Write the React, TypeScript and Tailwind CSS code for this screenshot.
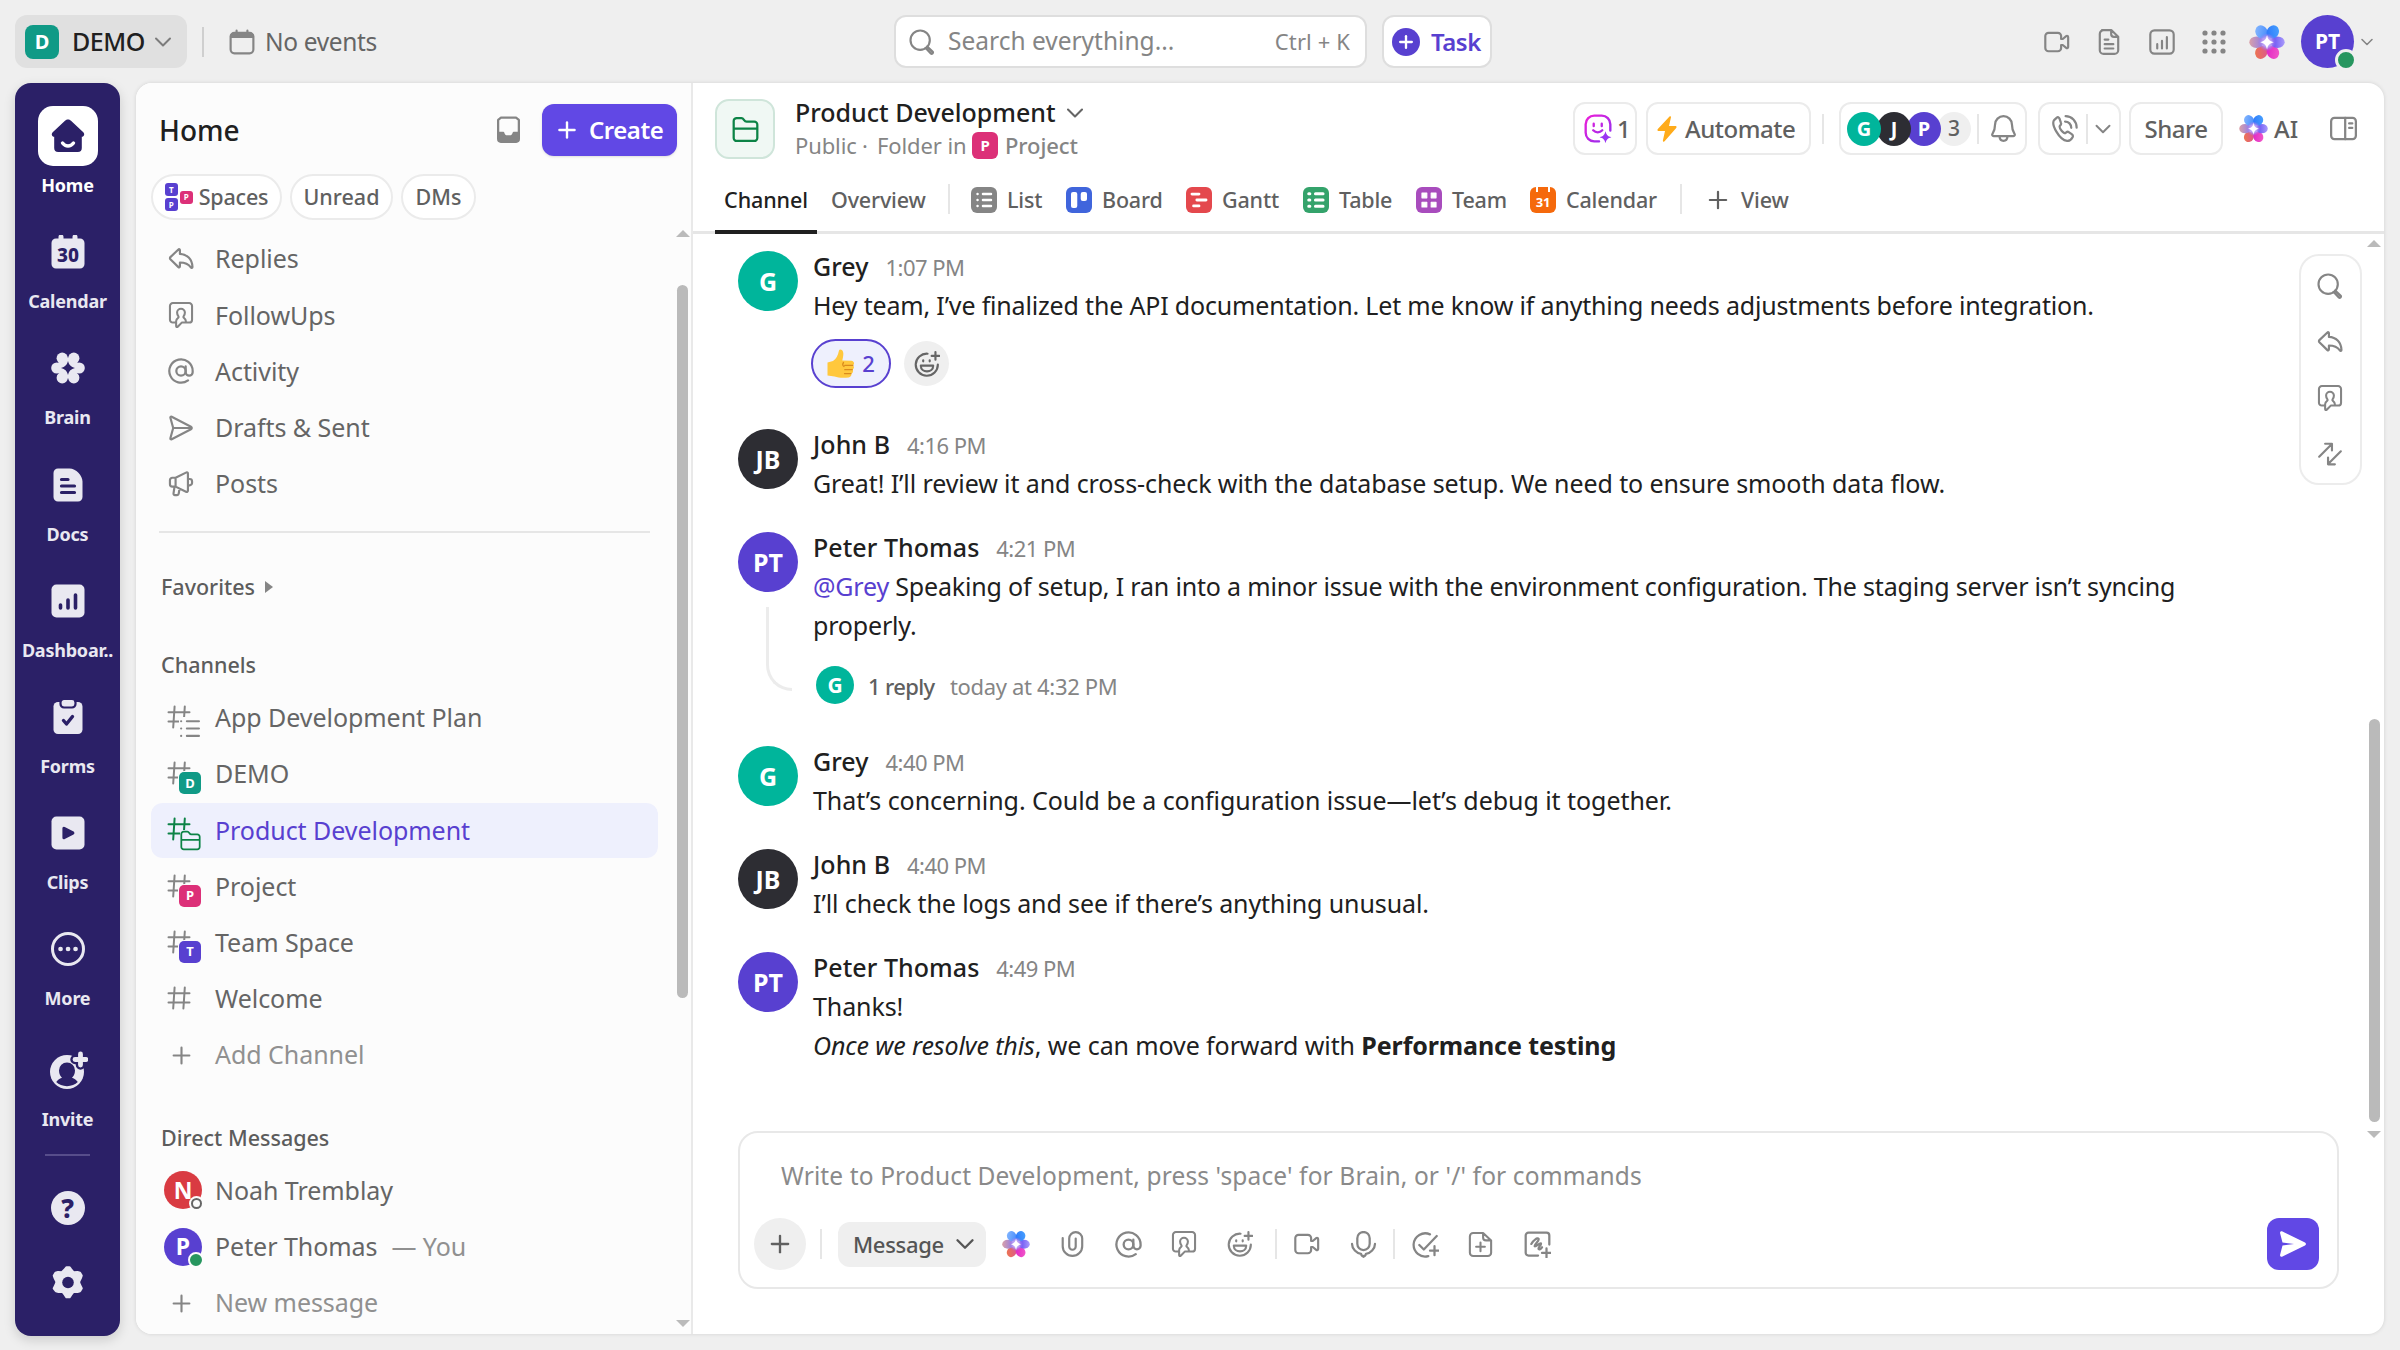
import type { ReactNode } from "react";
import clsx from "clsx";
import { AtSign, ChevronDown, Plus } from "lucide-react";

type IconProps = { size?: number; className?: string };

function Svg({
  size = 26,
  className,
  children,
  box = "0 0 24 24",
  sw = 2,
}: IconProps & { children: ReactNode; box?: string; sw?: number }) {
  return (
    <svg
      width={size}
      height={size}
      viewBox={box}
      fill="none"
      stroke="currentColor"
      strokeWidth={sw}
      strokeLinecap="round"
      strokeLinejoin="round"
      className={clsx("shrink-0", className)}
    >
      {children}
    </svg>
  );
}

/* ---------- outline icons ---------- */

const ReplyIcon = (p: IconProps) => (
  <Svg {...p}>
    <path d="M9.6 3.2c.6-.5 1.4-.1 1.4.7v3.4C17.5 7.6 22.3 12 22.6 19.4c0 .9-1 1.1-1.5.4-2.2-3.2-5.6-4.6-10.1-4.6v3.6c0 .8-.8 1.2-1.4.7l-7.400-7.300a1.300 1.300 0 0 1 0-1.900z" />
  </Svg>
);

const FollowUpIcon = (p: IconProps) => (
  <Svg {...p} sw={1.900}>
    <path d="M7.500 19H4.500a2.700 2.700 0 0 1-2.700-2.700V3.700A2.700 2.700 0 0 1 4.500 1h15a2.700 2.700 0 0 1 2.700 2.700v12.600a2.700 2.700 0 0 1-2.700 2.700h-6.800l-3.700 3.900c-.7.6-1.500.2-1.500-.7V17.800c0-1.500.6-2.400 1.800-3.200.6-.4.6-1 .2-1.500-.8-1-1.100-2.100-1.100-3.300a3.600 3.600 0 0 1 7.200 0c0 1.200-.3 2.300-1.100 3.300-.4.5-.4 1.100.2 1.500 1.200.8 1.800 1.700 1.800 3.200" />
  </Svg>
);

const PlaneIcon = (p: IconProps) => (
  <Svg {...p}>
    <path d="M2.200 2.600c-.2-.8.4-1.300 1.200-1l17.800 9.300c1 .5 1 1.700 0 2.200L3.400 22.400c-.8.3-1.400-.2-1.200-1L4.800 12zM4.800 12h16.400" />
  </Svg>
);

const MegaphoneIcon = (p: IconProps) => (
  <Svg {...p}>
    <path d="M7 6.200h-3A2.200 2.200 0 0 0 1.800 8.400v3.800A2.200 2.200 0 0 0 4 14.400h3zM7 6.200l9.600-4.700c1-.5 1.800 0 1.800 1v15.600c0 1-.8 1.500-1.800 1L7 14.400M18.400 7.400h1.600a2.200 2.200 0 0 1 2.200 2.200v1.400a2.200 2.200 0 0 1-2.200 2.200h-1.600M6 14.600l-.9 6c-.1.9.4 1.600 1.300 1.600h2c.8 0 1.400-.5 1.500-1.300l.7-4.700" />
  </Svg>
);

const SearchIcon = (p: IconProps) => (
  <Svg {...p}>
    <circle cx="10.300" cy="10.300" r="8.900" />
    <path d="m16.800 16.200 4.900 4.700a1.100 1.100 0 0 1-1.600 1.600l-4.700-4.900" />
  </Svg>
);

const SwapIcon = (p: IconProps) => (
  <Svg {...p}>
    <path d="M2 14.500 13.500 3M7.500 2.500h6.300v6.200M22 9.500 10.500 21M16.500 21.500h-6.300v-6.200" />
  </Svg>
);

const VideoIcon = (p: IconProps) => (
  <Svg {...p}>
    <path d="M4.200 3.500h8.600a3 3 0 0 1 3 3v2.700h1.500l3.200-2.600c.8-.6 1.800-.1 1.800.9v9c0 1-1 1.500-1.800.9l-3.200-2.600h-1.500v2.700a3 3 0 0 1-3 3H4.200a3 3 0 0 1-3-3v-11a3 3 0 0 1 3-3z" />
  </Svg>
);

const MicIcon = (p: IconProps) => (
  <Svg {...p}>
    <rect x="6.500" y="0.900" width="11" height="16" rx="5.500" />
    <path d="M1.800 11.500c0 4.300 4 8.300 8 8.800.6 2.900 3.800 2.900 4.400 0 4-.5 8-4.500 8-8.800M12 22.200v.8" />
  </Svg>
);

const ClipIcon = (p: IconProps) => (
  <Svg {...p}>
    <path d="M2.500 6.500v7.500a9 9 0 0 0 18 0V7a6 6 0 0 0-12 0v7.300a3 3 0 0 0 6 0V7" />
  </Svg>
);

const BellIcon = (p: IconProps) => (
  <Svg {...p}>
    <path d="M12 1a7.500 7.500 0 0 0-7.500 7.500c0 4-1 6.300-2.300 8.200-.6 1-.1 2.100 1 2.100h17.600c1.100 0 1.600-1.100 1-2.100-1.300-1.900-2.300-4.200-2.300-8.200A7.500 7.500 0 0 0 12 1zM8.500 19.500c.5 4.600 6.500 4.600 7 0" />
  </Svg>
);

const HashIcon = (p: IconProps) => (
  <Svg {...p} size={24}>
    <path d="M7.600 1.500 6.200 22.500M17.800 1.500 16.400 22.500M1.500 7.300h21M1.500 16.500h21" />
  </Svg>
);

const DocIcon = (p: IconProps) => (
  <Svg {...p}>
    <path d="M5.500 1h8.600l6.400 6.200v12.300A3.500 3.500 0 0 1 17 23H7a3.500 3.500 0 0 1-3.500-3.500v-15A3.500 3.500 0 0 1 7 1M14 1.200v3.400a2.600 2.600 0 0 0 2.600 2.600h3.600M8 9.800h3.400M8 14h8M8 18h8" />
  </Svg>
);

const DocPlusIcon = (p: IconProps) => (
  <Svg {...p}>
    <path d="M14.500 1H5A3.200 3.200 0 0 0 1.800 4.200v15.600A3.200 3.200 0 0 0 5 23h14a3.200 3.200 0 0 0 3.200-3.200V8.200zM14.500 1.200v4a2.800 2.800 0 0 0 2.800 2.800h4.700M12 10v8.400M7.800 14.200h8.400" />
  </Svg>
);

const ChartIcon = (p: IconProps) => (
  <Svg {...p}>
    <rect x="1.200" y="1.200" width="21.600" height="21.600" rx="3.800" />
    <path d="M7.600 14v4M12 11v7M16.500 7.500V18" />
  </Svg>
);

const SmilePlusIcon = (p: IconProps) => (
  <Svg {...p}>
    <path d="M12.500 2.500A10.200 10.200 0 1 0 22 12.500M19.800 1v7M16.300 4.500h7M8.500 8.500v1M14.500 8.500v1M6.300 13.500h11.400c0 7-11.400 7-11.400 0z" />
  </Svg>
);

const CheckPlusIcon = (p: IconProps) => (
  <Svg {...p}>
    <path d="M16 3a10.300 10.300 0 1 0-1.500 19.300M6.500 12.500l4 4L22 4.500M20 13.500v8M16 17.500h8" />
  </Svg>
);

const ScribblePlusIcon = (p: IconProps) => (
  <Svg {...p}>
    <path d="M12.500 21.800H4a2.500 2.500 0 0 1-2.500-2.500V4A2.500 2.500 0 0 1 4 1.500h16A2.500 2.500 0 0 1 22.500 4v8M6.500 11.500c2-3.500 5.500-6 6.500-4.500s-4.500 5.500-3.500 6.500 4.500-3.500 5.500-2.500-3 4-2 5 2.500-1 3-1.500M20 15.500v8M16 19.500h8" />
  </Svg>
);

const CalendarIcon = (p: IconProps) => (
  <Svg {...p}>
    <rect x="1.500" y="3.500" width="21" height="19" rx="3.500" />
    <path d="M1.800 7.200h20.400M2.200 5.600h19.600M7 1.500v3.500M17 1.500v3.500" />
  </Svg>
);

const FolderIcon = (p: IconProps) => (
  <Svg {...p}>
    <path d="M1.500 19.500v-15A2.700 2.700 0 0 1 4.200 1.800h4.200c2.400 0 2 3.200 4.600 3.200h6.800a2.700 2.700 0 0 1 2.700 2.700v11.800a2.700 2.700 0 0 1-2.700 2.700H4.200a2.700 2.700 0 0 1-2.700-2.700zM1.500 11.200h21" />
  </Svg>
);

const PhoneIcon = (p: IconProps) => (
  <Svg {...p}>
    <path d="M5.200 2.300 3 4.300C-.5 8 7.500 22.300 14.300 23c2 .2 4-1.600 4.900-3.300.6-1.200.2-2-.8-2.700l-2.300-1.600c-1.200-.8-2.200-.6-3.100.5-1.500 1.500-6.300-4.500-5.100-6.200 1-.9 1.500-1.800.8-3.100L7.500 3.100c-.5-1-1.400-1.500-2.300-.8zM13 1c5.500 0 9.800 4.600 9.800 10.300M12.500 5.800c3.200 0 5.500 2.500 5.500 5.600" />
  </Svg>
);

const PanelIcon = (p: IconProps) => (
  <Svg {...p}>
    <rect x="1" y="2.500" width="22" height="19" rx="3" />
    <path d="M13.500 2.500v19M17 7.500h2.800M17 11.500h2.800" />
  </Svg>
);

const InboxIcon = (p: IconProps) => (
  <Svg {...p} sw={2}>
    <path d="M5.300 1.500h13.400l2.500 2v17a2.400 2.400 0 0 1-2.400 2.400H5.200a2.400 2.400 0 0 1-2.400-2.400v-17z" />
    <path
      d="M2.300 14h5.200c1 0 1 3 2.500 3h4c1.500 0 1.500-3 2.500-3h5.200v6.500a2.400 2.400 0 0 1-2.400 2.400H5a2.400 2.400 0 0 1-2.400-2.400z"
      fill="currentColor"
      stroke="none"
    />
  </Svg>
);

const ListHashIcon = () => (
  <Svg size={21} box="0 0 20 20" sw={2} className="absolute left-[11px] top-[10px] bg-[#fcfcfc]">
    <path d="M2 4h.1M2 11h.1M2 18h.1M7.500 4H19M7.500 11H19M7.500 18H19" />
  </Svg>
);

/* ---------- filled rail icons ---------- */

const HomeSolid = () => (
  <Svg size={34} box="0 0 34 34">
    <path
      d="M17 0.500c1.200 0 2 .5 3 1.300l12.300 11.400c1.700 1.800.9 4.300-1.500 4.600V29a4 4 0 0 1-4 4H7.200a4 4 0 0 1-4-4V17.800c-2.400-.3-3.200-2.800-1.500-4.600L14 1.800c1-.8 1.800-1.300 3-1.300z"
      fill="#2b2067"
      stroke="none"
    />
    <path d="M11.500 24c3 4 8 4 11 0" stroke="#fff" strokeWidth="3.400" />
  </Svg>
);

const Calendar30 = () => (
  <Svg size={34} box="0 0 34 34">
    <path
      d="M5 3.500h2.500V2a2.500 2.500 0 0 1 5 0v1.500h9V2a2.500 2.500 0 0 1 5 0v1.500H29a4.500 4.500 0 0 1 4.500 4.500v21a4.500 4.500 0 0 1-4.500 4.500H5A4.500 4.500 0 0 1 .5 29V8A4.500 4.500 0 0 1 5 3.500z"
      fill="currentColor"
      stroke="none"
    />
    <text x="17" y="26.500" textAnchor="middle" fontSize="19" fontWeight="800" fill="#2b2067" stroke="none">
      30
    </text>
  </Svg>
);

const BrainSolid = () => (
  <Svg size={34} box="0 0 34 34">
    <g fill="currentColor" stroke="none">
      <circle cx="5.800" cy="17" r="5.600" />
      <circle cx="28.200" cy="17" r="5.600" />
      <circle cx="11.200" cy="7.200" r="5.600" />
      <circle cx="22.800" cy="7.200" r="5.600" />
      <circle cx="11.200" cy="26.800" r="5.600" />
      <circle cx="22.800" cy="26.800" r="5.600" />
      <circle cx="17" cy="17" r="10.500" />
    </g>
    <path d="M17 10c1.200 4.200 2.800 5.800 7 7-4.200 1.200-5.800 2.800-7 7-1.200-4.200-2.800-5.800-7-7 4.200-1.200 5.800-2.800 7-7z" fill="#2b2067" stroke="none" />
  </Svg>
);

const DocSolid = () => (
  <Svg size={34} box="0 0 34 34">
    <path
      d="M7 .5h11.500c6.500 0 13 7 13 13V29a4.500 4.500 0 0 1-4.500 4.500H7A4.500 4.500 0 0 1 2.500 29V5A4.500 4.500 0 0 1 7 .5z"
      fill="currentColor"
      stroke="none"
    />
    <path d="M10.500 11.500h6.500M10.500 18h13M10.500 24.500h13" stroke="#2b2067" strokeWidth="3.200" />
  </Svg>
);

const DashSolid = () => (
  <Svg size={34} box="0 0 34 34">
    <rect x=".5" y=".5" width="33" height="33" rx="5" fill="currentColor" stroke="none" />
    <path d="M9.500 21v3M17 16v8M24.500 11v13" stroke="#2b2067" strokeWidth="3.600" />
  </Svg>
);

const FormSolid = () => (
  <Svg size={34} box="0 0 34 34" className="overflow-visible">
    <rect x="2.500" y="2" width="29" height="32" rx="4.500" fill="currentColor" stroke="none" />
    <rect x="9.500" y="-1" width="15" height="8.500" rx="3.500" fill="currentColor" stroke="#2b2067" strokeWidth="2.200" />
    <path d="m12.500 20.500 3 3.500 6-7.500" stroke="#2b2067" strokeWidth="3.400" />
  </Svg>
);

const ClipSolid = () => (
  <Svg size={34} box="0 0 34 34">
    <rect x=".5" y=".5" width="33" height="33" rx="5" fill="currentColor" stroke="none" />
    <path d="M13 12.300v9.400l8.800-4.700z" fill="#2b2067" stroke="#2b2067" strokeWidth="3.200" />
  </Svg>
);

const MoreRound = () => (
  <Svg size={36} box="0 0 36 36" sw={3}>
    <circle cx="18" cy="18" r="15.500" />
    <path d="M10.500 18h.1M18 18h.1M25.500 18h.1" strokeWidth="4.600" />
  </Svg>
);

const InviteSolid = () => (
  <Svg size={40} box="0 0 40 40">
    <circle cx="19" cy="22" r="17" fill="currentColor" stroke="none" />
    <path d="M19 12.500a8 8 0 0 1 8 8c0 3.500-1.600 5.800-3 7.200 2.600 1 4.500 2.300 5.800 4.300-5 5.500-16.600 5.500-21.600 0 1.300-2 3.200-3.300 5.800-4.300-1.400-1.400-3-3.700-3-7.200a8 8 0 0 1 8-8z" fill="#2b2067" stroke="none" />
    <path d="M32.500 4v11M27 9.500h11" stroke="#2b2067" strokeWidth="9.500" />
    <path d="M32.500 4v11M27 9.500h11" strokeWidth="4.800" />
  </Svg>
);

const HelpSolid = () => (
  <span className="flex h-[34px] w-[34px] items-center justify-center rounded-full bg-[#e9e8f1] text-[26px] font-extrabold leading-none text-[#2b2067]">
    ?
  </span>
);

const GearSolid = () => (
  <Svg size={34} box="0 0 34 34">
    <g fill="currentColor" stroke="currentColor" strokeWidth="2.500">
      <path d="m14 3.500 1.500-2h3l1.500 2 2.500 3 4-.2 2.500.7 1.500 2.600-.8 2.400-1.700 3.400V17l1.500 3.300 1 2.100-1.500 2.600-2.500.7-4-.2-2.500 3.200-1.500 2.300h-3l-1.500-2.300-2.500-3.200-4 .2-2.500-.7L3 22.400l1-2.100L5.500 17v-1.600L3.800 12 3 9.600 4.500 7 7 6.300l4 .2z" />
    </g>
    <circle cx="17" cy="16.500" r="5.800" fill="#2b2067" stroke="none" />
  </Svg>
);

/* ---------- colour marks ---------- */

function BrainMark({ size = 36 }: { size?: number }) {
  return (
    <svg width={size} height={size} viewBox="0 0 36 36" className="shrink-0">
      <defs>
        <linearGradient id="petal-l" x1="0" x2="1">
          <stop offset="0" stopColor="#d9a0a8" />
          <stop offset="1" stopColor="#8f7be8" />
        </linearGradient>
        <linearGradient id="petal-r" x1="1" x2="0">
          <stop offset="0" stopColor="#a99bfb" />
          <stop offset="1" stopColor="#5f45f2" />
        </linearGradient>
        <linearGradient id="petal-tl" x1="0" y1="0" x2="1" y2="1">
          <stop offset="0" stopColor="#8cbcff" />
          <stop offset="1" stopColor="#3f86fb" />
        </linearGradient>
        <linearGradient id="petal-tr" x1="1" y1="0" x2="0" y2="1">
          <stop offset="0" stopColor="#49a5ff" />
          <stop offset="1" stopColor="#2a72fa" />
        </linearGradient>
        <linearGradient id="petal-bl" x1="0" y1="1" x2="1" y2="0">
          <stop offset="0" stopColor="#f07a45" />
          <stop offset="1" stopColor="#d8539a" />
        </linearGradient>
        <linearGradient id="petal-br" x1="1" y1="1" x2="0" y2="0">
          <stop offset="0" stopColor="#f35fc9" />
          <stop offset="1" stopColor="#df1fc4" />
        </linearGradient>
        <radialGradient id="petal-core">
          <stop offset="0" stopColor="#efe6ff" />
          <stop offset="0.500" stopColor="#b79bf3" />
          <stop offset="1" stopColor="#9c6ff0" stopOpacity="0" />
        </radialGradient>
      </defs>
      <ellipse cx="12.500" cy="28.300" rx="6" ry="6.800" fill="url(#petal-bl)" transform="rotate(30 12.500 28)" />
      <ellipse cx="23.800" cy="28.300" rx="6" ry="6.800" fill="url(#petal-br)" transform="rotate(-30 23.800 28)" />
      <ellipse cx="7.500" cy="18.200" rx="7.200" ry="5.800" fill="url(#petal-l)" />
      <ellipse cx="28.500" cy="18.200" rx="7.200" ry="5.800" fill="url(#petal-r)" />
      <ellipse cx="12.500" cy="8" rx="6" ry="6.800" fill="url(#petal-tl)" transform="rotate(-30 12.500 8)" />
      <ellipse cx="23.800" cy="8" rx="6" ry="6.800" fill="url(#petal-tr)" transform="rotate(30 23.800 8)" />
      <circle cx="18" cy="18.200" r="9" fill="url(#petal-core)" />
      <path d="M18 11.500c1.200 4.300 2.500 5.600 6.800 6.700-4.300 1.200-5.600 2.400-6.800 6.800-1.200-4.400-2.500-5.600-6.800-6.800 4.300-1.100 5.600-2.400 6.800-6.700z" fill="#fff" />
    </svg>
  );
}

const ThumbIcon = () => (
  <svg width="29" height="30" viewBox="0 0 29 30" className="shrink-0">
    <path
      d="M1.500 13.500 7 12c3-2 5-5.500 6-10.500C13.500-.3 17 .3 17.300 4c.2 3-.6 5.500-1 7.500l9 .3c3 .2 3.600 3.500 1.600 4.500 1.600 1.200 1.300 3.700-.5 4.300 1.200 1.400.5 3.400-1.200 3.900.7 1.500-.3 3.600-2.500 3.900-4 .6-9.700.8-14.200-.9L1.500 26.500z"
      fill="#ffc83d"
    />
    <path d="M26.800 16.400h-8M26.300 20.700h-7.500M25 24.600h-6.500M17.500 13.500c-1.200 1.600-1 3 .5 4" fill="none" stroke="#d98a1c" strokeWidth="1.300" strokeLinecap="round" />
  </svg>
);

const AgentIcon = () => (
  <svg width="28" height="30" viewBox="0 0 26 28" fill="none" strokeLinecap="round" className="shrink-0">
    <defs>
      <linearGradient id="agent" x1="0" y1="0" x2="1" y2="1">
        <stop offset="0" stopColor="#ee1fd8" />
        <stop offset="1" stopColor="#8b2ff0" />
      </linearGradient>
    </defs>
    <path
      d="M14 25.500H9.500A8 8 0 0 1 1.500 17.500v-8a8 8 0 0 1 8-8h7a8 8 0 0 1 8 8v6M9 9v2.200M16.500 9v2.200M8.500 15.200c2.500 2.600 6 2.600 8.500 0"
      stroke="url(#agent)"
      strokeWidth="2.200"
    />
    <path d="M20 16c1 3.600 2 4.600 5.500 5.600-3.500 1-4.500 2-5.500 5.600-1-3.600-2-4.600-5.500-5.600 3.500-1 4.500-2 5.500-5.600z" fill="#9a35f3" />
  </svg>
);

const BoltIcon = () => (
  <svg width="20" height="26" viewBox="0 0 20 26" className="shrink-0">
    <path d="M12.500.5c.8-.8 1.800-.2 1.500.8L12 10h6.300c1.200 0 1.600 1 .9 1.900L7.600 25.300c-.8.9-2 .2-1.700-.9L8 15H1.700C.5 15 .1 14 .8 13.100z" fill="#ffab1a" />
  </svg>
);

/* ---------- small pieces ---------- */

function Square({ letter, className }: { letter: string; className: string }) {
  return (
    <span className={clsx("flex shrink-0 items-center justify-center font-bold leading-none text-white", className)}>
      {letter}
    </span>
  );
}

function Avatar({ text, className }: { text: string; className: string }) {
  return (
    <span
      className={clsx(
        "flex shrink-0 items-center justify-center rounded-full font-bold leading-none text-white",
        className
      )}
    >
      {text}
    </span>
  );
}

/* ---------- top bar ---------- */

function TopBar() {
  return (
    <header className="flex h-[83px] shrink-0 items-center pl-[15px] pr-[23px]">
      <div className="flex h-[53px] w-[172px] items-center rounded-xl bg-[#e0e0e0] pl-[10px]">
        <Square letter="D" className="h-[34px] w-[34px] rounded-lg bg-[#109a86] text-[20px]" />
        <span className="ml-[13px] w-[77px] text-[25px] font-medium tracking-[-0.02em] text-[#202020]">DEMO</span>
        <ChevronDown size={28} strokeWidth={1.700} className="text-[#7c7c7c]" />
      </div>
      <div className="ml-[15px] h-[30px] w-[2px] bg-[#cfcfcf]" />
      <CalendarIcon size={26} className="ml-[25px] text-[#858585]" />
      <span className="ml-[10px] w-[629px] pt-px text-[24.500px] tracking-[-0.015em] text-[#656565]">No events</span>

      <div className="flex h-[53px] w-[473px] items-center rounded-xl border-2 border-[#dedede] bg-white pl-[13px] pr-[15px] text-[#858585]">
        <SearchIcon size={26} />
        <span className="ml-[13px] text-[24.500px]">Search everything...</span>
        <span className="ml-auto text-[22px] tracking-[0.005em]">Ctrl + K</span>
      </div>
      <div className="ml-[15px] flex h-[53px] w-[110px] items-center rounded-xl border-2 border-[#dedede] bg-white pl-[8px] text-[#5840d0]">
        <span className="flex h-7 w-7 items-center justify-center rounded-full bg-[#5840d0] text-white">
          <Plus size={20} strokeWidth={2.800} />
        </span>
        <span className="ml-[11px] text-[24px] font-semibold tracking-[-0.02em]">Task</span>
      </div>

      <div className="ml-auto flex items-center text-[#858585]">
        <VideoIcon />
        <DocIcon className="ml-[26px]" />
        <ChartIcon className="ml-[27px]" />
        <svg width="24" height="24" viewBox="0 0 24 24" className="ml-[27px]" fill="currentColor">
          {[3, 12, 21].map((y) => [3, 12, 21].map((x) => <circle key={`${x}-${y}`} cx={x} cy={y} r="2.600" />))}
        </svg>
        <span className="ml-[23px] flex">
          <BrainMark size={36} />
        </span>
        <div className="relative ml-[16px]">
          <Avatar text="PT" className="h-[53px] w-[53px] bg-[#5840d0] text-[21px]" />
          <span className="absolute -bottom-[3px] -right-[3px] h-[22px] w-[22px] rounded-full border-[3px] border-[#efefef] bg-[#27965f]" />
        </div>
        <ChevronDown size={20} strokeWidth={1.900} className="ml-[3px]" />
      </div>
    </header>
  );
}

/* ---------- rail ---------- */

const RAIL: { label: string; icon: ReactNode; active?: boolean }[] = [
  { label: "Home", icon: <HomeSolid />, active: true },
  { label: "Calendar", icon: <Calendar30 /> },
  { label: "Brain", icon: <BrainSolid /> },
  { label: "Docs", icon: <DocSolid /> },
  { label: "Dashboar..", icon: <DashSolid /> },
  { label: "Forms", icon: <FormSolid /> },
  { label: "Clips", icon: <ClipSolid /> },
  { label: "More", icon: <MoreRound /> },
];

function Rail() {
  return (
    <nav className="flex h-[1253px] w-[105px] shrink-0 flex-col items-center rounded-[16px] bg-[#2b2067] pt-[23px] text-[#e9e8f1] shadow-[0_4px_12px_rgba(0,0,0,0.15)]">
      {RAIL.map((item) => (
        <div key={item.label} className="flex h-[116.200px] w-full shrink-0 flex-col items-center">
          <div
            className={clsx(
              "flex h-[60px] w-[60px] items-center justify-center",
              item.active && "rounded-[15px] bg-white"
            )}
          >
            {item.icon}
          </div>
          <span
            className={clsx(
              "mt-[6px] whitespace-nowrap text-[18px] font-bold leading-[26px] tracking-[-0.012em]",
              item.active && "text-white"
            )}
          >
            {item.label}
          </span>
        </div>
      ))}
      <div className="mt-[4px] flex h-[60px] items-center">
        <InviteSolid />
      </div>
      <span className="mt-[6px] text-[18px] font-bold leading-[26px] tracking-[-0.012em]">Invite</span>
      <div className="mt-[22px] h-[2px] w-[45px] shrink-0 bg-[#574d8b]" />
      <div className="mt-[35px]">
        <HelpSolid />
      </div>
      <div className="mt-[41px]">
        <GearSolid />
      </div>
    </nav>
  );
}

/* ---------- sidebar ---------- */

const NAV = [
  { label: "Replies", icon: <ReplyIcon /> },
  { label: "FollowUps", icon: <FollowUpIcon /> },
  { label: "Activity", icon: <AtSign size={28} strokeWidth={1.900} className="-ml-px" /> },
  { label: "Drafts & Sent", icon: <PlaneIcon /> },
  { label: "Posts", icon: <MegaphoneIcon /> },
];

const BADGE = "absolute left-[11px] top-[9px] h-[22px] w-[22px] rounded-[5px] text-[13px] ring-1 ring-[#fcfcfc]";

const CHANNELS: { label: string; badge?: ReactNode; active?: boolean }[] = [
  { label: "App Development Plan", badge: <ListHashIcon /> },
  { label: "DEMO", badge: <Square letter="D" className={clsx(BADGE, "bg-[#109a86]")} /> },
  {
    label: "Product Development",
    active: true,
    badge: <FolderIcon size={21} className="absolute left-[12px] top-[11px] bg-[#eef0fd]" />,
  },
  { label: "Project", badge: <Square letter="P" className={clsx(BADGE, "bg-[#dc3078]")} /> },
  { label: "Team Space", badge: <Square letter="T" className={clsx(BADGE, "bg-[#5840d0]")} /> },
  { label: "Welcome" },
];

const ROW = "flex h-[56.200px] shrink-0 items-center pl-[17px]";
const ROW_TEXT = "text-[25px] tracking-[-0.002em] whitespace-nowrap";
const PILL =
  "flex h-[46px] items-center justify-center rounded-full border-2 border-[#ebebeb] bg-white text-[21.500px] font-medium text-[#606060]";
const SECTION = "ml-[10px] flex h-[30px] shrink-0 items-center text-[21.500px] font-medium text-[#5c5c5c]";

function Sidebar() {
  return (
    <aside className="flex w-[557px] shrink-0 flex-col border-r-2 border-[#e9e9e9] bg-[#fcfcfc]">
      <div className="flex h-[91px] items-center pl-[23px] pr-[14px] pt-[2px]">
        <h1 className="text-[28px] font-medium text-[#202020]">Home</h1>
        <InboxIcon size={27} className="ml-auto text-[#858585]" />
        <button className="ml-[20px] flex h-[52px] w-[135px] items-center rounded-xl bg-[#6148e5] pl-[12px] text-white shadow-sm">
          <Plus size={26} strokeWidth={2.200} />
          <span className="ml-[9px] text-[24px] font-semibold tracking-[-0.02em]">Create</span>
        </button>
      </div>
      <div className="flex gap-[8px] pl-[15px]">
        <div className={clsx(PILL, "w-[131px]")}>
          <span className="mr-[6px] flex items-center gap-[2px]">
            <span className="flex flex-col gap-[2px]">
              <Square letter="T" className="h-[13px] w-[13px] rounded-[3px] bg-[#5840d0] text-[8px]" />
              <Square letter="P" className="h-[13px] w-[13px] rounded-[3px] bg-[#5840d0] text-[8px]" />
            </span>
            <Square letter="P" className="h-[13px] w-[13px] rounded-[3px] bg-[#dc3078] text-[8px]" />
          </span>
          <span className="pt-px tracking-[-0.01em]">Spaces</span>
        </div>
        <div className={clsx(PILL, "w-[103px] pt-px")}>Unread</div>
        <div className={clsx(PILL, "w-[75px] pt-px")}>DMs</div>
      </div>

      <div className="flex min-h-0 flex-1">
        <div className="mt-[11px] flex min-w-0 flex-1 flex-col pl-[15px] text-[#656565]">
          {NAV.map((item) => (
            <div key={item.label} className={ROW}>
              <span className="flex w-[47px] text-[#858585]">{item.icon}</span>
              <span className={ROW_TEXT}>{item.label}</span>
            </div>
          ))}
          <div className="ml-[8px] mt-[19px] h-[2px] w-[491px] shrink-0 bg-[#e6e6e6]" />
          <div className={clsx(SECTION, "mt-[39px]")}>
            Favorites
            <span className="ml-[10px] h-0 w-0 border-y-[6px] border-l-[8px] border-y-transparent border-l-[#858585]" />
          </div>
          <div className={clsx(SECTION, "mt-[48px]")}>Channels</div>
          <div className="mt-[10px] flex flex-col">
            {CHANNELS.map((c) => (
              <div
                key={c.label}
                className={clsx(
                  ROW,
                  "w-[507px] rounded-xl border-y-[1.500px] border-transparent bg-clip-padding",
                  c.active && "bg-[#eef0fd] text-[#5840d0]"
                )}
              >
                <span className={clsx("relative flex w-[47px]", c.active ? "text-[#0c8346]" : "text-[#858585]")}>
                  <HashIcon className="-ml-px -mt-[2px]" />
                  {c.badge}
                </span>
                <span className={ROW_TEXT}>{c.label}</span>
              </div>
            ))}
            <div className={clsx(ROW, "text-[#909090]")}>
              <span className="flex w-[47px]">
                <Plus size={27} strokeWidth={1.900} className="text-[#858585]" />
              </span>
              <span className={ROW_TEXT}>Add Channel</span>
            </div>
          </div>
          <div className={clsx(SECTION, "mt-[40px]")}>Direct Messages</div>
          <div className="mt-[9px] flex flex-col">
            <div className={ROW}>
              <span className="relative -ml-[4px] flex w-[51px]">
                <Avatar text="N" className="h-[38px] w-[38px] bg-[#d93b42] text-[23px]" />
                <span className="absolute left-[25px] top-[25px] h-[15px] w-[15px] rounded-full bg-[#fcfcfc] p-[2px]">
                  <span className="block h-[11px] w-[11px] rounded-full border-2 border-[#656565]" />
                </span>
              </span>
              <span className={ROW_TEXT}>Noah Tremblay</span>
            </div>
            <div className={ROW}>
              <span className="relative -ml-[4px] flex w-[51px]">
                <Avatar text="P" className="h-[38px] w-[38px] bg-[#5840d0] text-[23px]" />
                <span className="absolute left-[24px] top-[24px] h-[16px] w-[16px] rounded-full border-2 border-[#fcfcfc] bg-[#27965f]" />
              </span>
              <span className={ROW_TEXT}>Peter Thomas</span>
              <span className={clsx(ROW_TEXT, "ml-[14px] text-[#909090]")}>— You</span>
            </div>
            <div className={clsx(ROW, "pt-px text-[#909090]")}>
              <span className="flex w-[47px]">
                <Plus size={27} strokeWidth={1.900} className="text-[#858585]" />
              </span>
              <span className={ROW_TEXT}>New message</span>
            </div>
          </div>
        </div>
        <div className="mt-[10px] flex w-[17px] shrink-0 flex-col items-center pb-[7px]">
          <span className="h-0 w-0 border-x-[7px] border-b-[7px] border-x-transparent border-b-[#bababa]" />
          <span className="mt-[48px] h-[713px] w-[11px] rounded-full bg-[#bababa]" />
          <span className="mt-auto h-0 w-0 border-x-[7px] border-t-[7px] border-x-transparent border-t-[#bababa]" />
        </div>
      </div>
    </aside>
  );
}

/* ---------- channel header ---------- */

const BTN = "flex h-[53px] items-center rounded-xl border-2 border-[#ebebeb] bg-white";

function ChannelHeader() {
  return (
    <div className="flex h-[98px] shrink-0 items-start pl-[22px] pt-[15px]">
      <div className="mt-px flex h-[60px] w-[60px] items-center justify-center rounded-[14px] border-2 border-[#cfe5da] bg-[#f0f8f4] text-[#0c8346]">
        <FolderIcon size={27} />
      </div>
      <div className="-mt-px ml-[20px] w-[780px]">
        <div className="flex h-[32px] items-center">
          <span className="w-[266px] whitespace-nowrap text-[25px] font-medium text-[#202020]">
            Product Development
          </span>
          <ChevronDown size={28} strokeWidth={1.800} className="text-[#656565]" />
        </div>
        <div className="flex h-[32px] items-center text-[22px] tracking-[-0.005em] text-[#858585]">
          <span className="w-[67px]">Public</span>
          <span className="w-[15px]">·</span>
          <span className="w-[95px] whitespace-nowrap">Folder in</span>
          <Square letter="P" className="h-[27px] w-[26px] rounded-md bg-[#dc3078] text-[15px]" />
          <span className="ml-[7px] font-medium">Project</span>
        </div>
      </div>

      <div className="-ml-[2px] mt-[4px] flex items-center text-[24px] font-medium text-[#606060]">
        <div className={clsx(BTN, "w-[64px] gap-[5px] pl-[9px]")}>
          <AgentIcon />
          <span>1</span>
        </div>
        <div className={clsx(BTN, "ml-[9px] w-[165px] gap-[8px] pl-[9px] tracking-[-0.02em]")}>
          <BoltIcon />
          Automate
        </div>
        <div className="ml-[11px] h-[30px] w-[2px] bg-[#e6e6e6]" />
        <div className={clsx(BTN, "ml-[15px] w-[188px] pl-[6px]")}>
          <Avatar text="G" className="z-30 h-[34px] w-[34px] bg-[#00b59b] text-[20px]" />
          <Avatar text="J" className="z-20 -ml-[4px] h-[34px] w-[34px] bg-[#2d2d33] text-[20px]" />
          <Avatar text="P" className="z-10 -ml-[4px] h-[34px] w-[34px] bg-[#5840d0] text-[20px]" />
          <span className="-ml-[4px] flex h-[34px] w-[34px] items-center justify-center rounded-full bg-[#efefef] text-[21px]">
            3
          </span>
          <span className="ml-[6px] h-[30px] w-[2px] bg-[#e6e6e6]" />
          <BellIcon size={27} className="ml-[11px] text-[#858585]" />
        </div>
        <div className={clsx(BTN, "ml-[11px] w-[83px] pl-[11px] text-[#858585]")}>
          <PhoneIcon size={27} />
          <span className="ml-[8px] h-[30px] w-[2px] bg-[#e6e6e6]" />
          <ChevronDown size={26} strokeWidth={1.800} className="ml-[2px]" />
        </div>
        <div className={clsx(BTN, "ml-[8px] w-[94px] justify-center tracking-[-0.02em]")}>Share</div>
        <span className="ml-[16px] flex">
          <BrainMark size={29} />
        </span>
        <span className="ml-[6px] w-[56px]">AI</span>
        <PanelIcon className="text-[#858585]" size={27} />
      </div>
    </div>
  );
}

const TAB_ICON = "rounded-[6px] text-white";

const TABS: { label: string; width: string; icon: ReactNode }[] = [
  {
    label: "List",
    width: "w-[95px]",
    icon: (
      <Svg sw={2.200} className={clsx(TAB_ICON, "bg-[#858585]")}>
        <path d="M6 6.500h.1M6 12h.1M6 17.500h.1M11 6.500H18.500M11 12H18.500M11 17.500H18.500" />
      </Svg>
    ),
  },
  {
    label: "Board",
    width: "w-[120px]",
    icon: (
      <Svg sw={1.800} className={clsx(TAB_ICON, "bg-[#4065dc]")}>
        <rect x="5.500" y="5.500" width="4" height="13" rx="1" fill="currentColor" />
        <rect x="14.500" y="5.500" width="4" height="6.500" rx="1" fill="currentColor" />
      </Svg>
    ),
  },
  {
    label: "Gantt",
    width: "w-[117px]",
    icon: (
      <Svg sw={2.600} className={clsx(TAB_ICON, "bg-[#e4484d]")}>
        <path d="M5.500 6.500h6.500M10 12H18.500M7 17.500h5" />
      </Svg>
    ),
  },
  {
    label: "Table",
    width: "w-[113px]",
    icon: (
      <Svg sw={2.800} className={clsx(TAB_ICON, "bg-[#34a36b]")}>
        <path d="M5.300 6.300h1M5.300 12h1M5.300 17.700h1M11.500 6.300h7M11.500 12h7M11.500 17.700h7" />
      </Svg>
    ),
  },
  {
    label: "Team",
    width: "w-[114px]",
    icon: (
      <Svg sw={1} className={clsx(TAB_ICON, "bg-[#a84cbd]")}>
        <path
          d="M5.500 5.500h4.500v4.500h-4.500zM14 5.500h4.500v4.500h-4.500zM5.500 14h4.500v4.500h-4.500zM14 14h4.500v4.500h-4.500z"
          fill="currentColor"
        />
      </Svg>
    ),
  },
  {
    label: "Calendar",
    width: "w-[150px]",
    icon: (
      <span className="relative flex h-[26px] w-[26px] items-center justify-center rounded-[6px] bg-[#f5690c] pt-[4px] text-[13px] font-bold leading-none text-white">
        <span className="absolute left-[6px] top-0 h-[5px] w-[2px] bg-white" />
        <span className="absolute right-[6px] top-0 h-[5px] w-[2px] bg-white" />
        31
      </span>
    ),
  },
];

function ViewTabs() {
  return (
    <div className="flex h-[53px] shrink-0 items-stretch border-b-[3px] border-[#e6e6e6] pl-[22px] text-[21.500px] font-medium tracking-[-0.008em] text-[#606060]">
      <div className="-mb-[3px] flex w-[102px] items-start justify-center border-b-4 border-[#202020] pt-[3px] tracking-[-0.005em] text-[#202020]">
        Channel
      </div>
      <div className="flex w-[131px] items-start pl-[14px] pt-[3px]">Overview</div>
      <div className="mt-[3px] h-[30px] w-[2px] self-start bg-[#e6e6e6]" />
      <div className="flex items-start pl-[21px] pt-[3px]">
        {TABS.map((t) => (
          <div key={t.label} className={clsx("flex items-center gap-[10px]", t.width)}>
            {t.icon}
            <span>{t.label}</span>
          </div>
        ))}
        <div className="h-[30px] w-[2px] bg-[#e6e6e6]" />
        <div className="flex items-center pl-[22px]">
          <Plus size={28} strokeWidth={1.900} />
          <span className="ml-[9px]">View</span>
        </div>
      </div>
    </div>
  );
}

/* ---------- messages ---------- */

function Message({
  initials,
  color,
  name,
  time,
  className,
  threaded,
  children,
}: {
  initials: string;
  color: string;
  name: string;
  time: string;
  className?: string;
  threaded?: boolean;
  children: ReactNode;
}) {
  return (
    <article className={clsx("flex shrink-0", className)}>
      <div className="flex w-[75px] shrink-0 flex-col">
        <Avatar text={initials} className={clsx("h-[60px] w-[60px] text-[25px]", color)} />
        {threaded && (
          <div className="ml-[28px] mt-[15px] h-[84px] w-[26px] rounded-bl-[26px] border-b-[3px] border-l-[3px] border-[#ececec]" />
        )}
      </div>
      <div>
        <div className="-mt-[3px] flex h-[38px] items-center">
          <span className="text-[25px] font-medium tracking-[0.002em]">{name}</span>
          <span className="ml-[17px] text-[22px] tracking-[-0.025em] text-[#858585]">{time}</span>
        </div>
        <div className="text-[25px] leading-[39px] tracking-[-0.004em]">{children}</div>
      </div>
    </article>
  );
}

function Messages() {
  return (
    <div className="flex flex-col pl-[45px] pt-[17px] text-[#202020]">
      <Message initials="G" color="bg-[#00b59b]" name="Grey" time="1:07 PM" className="h-[178px]">
        <p className="whitespace-nowrap tracking-[-0.007em]">
          Hey team, I’ve finalized the API documentation. Let me know if anything needs adjustments before integration.
        </p>
        <div className="-ml-[2px] mt-[14px] flex items-center gap-[13px]">
          <span className="flex h-[49px] w-[80px] items-center justify-center gap-[7px] rounded-full border-2 border-[#5840d0] bg-[#eef0fd] pr-px text-[22px] font-medium text-[#5840d0]">
            <ThumbIcon />2
          </span>
          <span className="flex h-[45px] w-[45px] items-center justify-center rounded-full bg-[#efefef] text-[#656565]">
            <SmilePlusIcon />
          </span>
        </div>
      </Message>
      <Message initials="JB" color="bg-[#2d2d33]" name="John B" time="4:16 PM" className="h-[103px]">
        Great! I’ll review it and cross-check with the database setup. We need to ensure smooth data flow.
      </Message>
      <Message initials="PT" color="bg-[#5840d0]" name="Peter Thomas" time="4:21 PM" className="h-[214px]" threaded>
        <p className="whitespace-nowrap tracking-[-0.007em]">
          <span className="text-[#5840d0]">@Grey</span> Speaking of setup, I ran into a minor issue with the environment
          configuration. The staging server isn’t syncing
          <br />
          properly.
        </p>
        <div className="ml-[3px] mt-[21px] flex items-center text-[22px] leading-none">
          <Avatar text="G" className="h-[38px] w-[38px] bg-[#00b59b] text-[21px]" />
          <span className="ml-[14px] w-[82px] pt-px font-medium tracking-[-0.03em] text-[#606060]">1 reply</span>
          <span className="pt-px tracking-[-0.015em] text-[#858585]">today at 4:32 PM</span>
        </div>
      </Message>
      <Message initials="G" color="bg-[#00b59b]" name="Grey" time="4:40 PM" className="h-[103px]">
        <p className="tracking-[-0.002em]">That’s concerning. Could be a configuration issue—let’s debug it together.</p>
      </Message>
      <Message initials="JB" color="bg-[#2d2d33]" name="John B" time="4:40 PM" className="h-[103px]">
        I’ll check the logs and see if there’s anything unusual.
      </Message>
      <Message initials="PT" color="bg-[#5840d0]" name="Peter Thomas" time="4:49 PM">
        Thanks!
        <br />
        <em>Once we resolve this</em>, we can move forward with <b>Performance testing</b>
      </Message>
    </div>
  );
}

function Composer() {
  return (
    <div className="mx-[45px] mb-[45px] flex h-[158px] shrink-0 flex-col rounded-[20px] border-2 border-[#e8e8e8] bg-white">
      <div className="pl-[41px] pt-[24px] text-[24.500px] leading-[38px] tracking-[0.005em] text-[#8a8a8a]">
        Write to Product Development, press 'space' for Brain, or '/' for commands
      </div>
      <div className="mt-[23px] flex items-center pl-[14px] pr-[18px] text-[#858585]">
        <span className="flex h-[52px] w-[52px] items-center justify-center rounded-full bg-[#efefef] text-[#606060]">
          <Plus size={28} strokeWidth={2} />
        </span>
        <span className="ml-[14px] h-[30px] w-[2px] bg-[#e6e6e6]" />
        <span className="ml-[16px] flex h-[45px] w-[148px] items-center rounded-xl bg-[#efefef] pl-[15px] text-[22px] font-medium tracking-[-0.015em] text-[#555]">
          <span className="w-[97px]">Message</span>
          <ChevronDown size={30} strokeWidth={1.900} className="shrink-0" />
        </span>
        <span className="ml-[16px] flex">
          <BrainMark size={28} />
        </span>
        <ClipIcon className="ml-[30px]" size={26} />
        <AtSign size={29} strokeWidth={1.900} className="ml-[28px]" />
        <FollowUpIcon className="ml-[28px]" />
        <SmilePlusIcon className="ml-[30px]" />
        <span className="ml-[22px] h-[30px] w-[2px] bg-[#e6e6e6]" />
        <VideoIcon className="ml-[17px]" />
        <MicIcon className="ml-[30px]" size={27} />
        <span className="ml-[16px] h-[30px] w-[2px] bg-[#e6e6e6]" />
        <CheckPlusIcon className="ml-[17px]" size={27} />
        <DocPlusIcon className="ml-[29px]" size={25} />
        <ScribblePlusIcon className="ml-[31px]" size={27} />
        <span className="ml-auto flex h-[52px] w-[52px] items-center justify-center rounded-xl bg-[#6148e5] text-white">
          <svg width="28" height="28" viewBox="0 0 28 28">
            <path d="M3.500 1.500 26 12.500c1.300.7 1.300 2.300 0 3L3.500 26.500c-1.500.7-2.800-.3-2.400-1.800L3.500 15.500 15 14 3.500 12.500 1.100 3.300C.7 1.800 2 .8 3.500 1.500z" fill="currentColor" />
          </svg>
        </span>
      </div>
    </div>
  );
}

export default function App() {
  return (
    <div className="flex h-[1350px] w-[2400px] flex-col overflow-hidden bg-[#efefef] font-['Noto_Sans',sans-serif]">
      <TopBar />
      <div className="flex min-h-0 flex-1 pl-[15px]">
        <Rail />
        <div className="ml-[16px] flex h-[1251px] w-[2248px] overflow-hidden rounded-[16px] bg-white shadow-[0_0_4px_rgba(0,0,0,0.12)]">
          <Sidebar />
          <main className="relative flex min-w-0 flex-1 flex-col">
            <ChannelHeader />
            <ViewTabs />
            <div className="relative flex min-h-0 flex-1">
              <div className="min-w-0 flex-1">
                <Messages />
              </div>
              <div className="mr-[3px] flex h-[904px] w-[14px] flex-col items-center pt-[6px]">
                <span className="h-0 w-0 border-x-[7px] border-b-[7px] border-x-transparent border-b-[#bababa]" />
                <span className="mt-[472px] h-[403px] w-[11px] rounded-full bg-[#bababa]" />
                <span className="mt-auto h-0 w-0 border-x-[7px] border-t-[7px] border-x-transparent border-t-[#bababa]" />
              </div>
              {/* floating quick actions, drawn over the message list */}
              <div className="absolute right-[22px] top-[20px] flex h-[231px] w-[63px] flex-col items-center gap-[30px] rounded-[20px] border-2 border-[#ececec] bg-white pr-[2px] pt-[17px] text-[#858585]">
                <SearchIcon />
                <ReplyIcon />
                <FollowUpIcon />
                <SwapIcon />
              </div>
            </div>
            <Composer />
          </main>
        </div>
      </div>
    </div>
  );
}
